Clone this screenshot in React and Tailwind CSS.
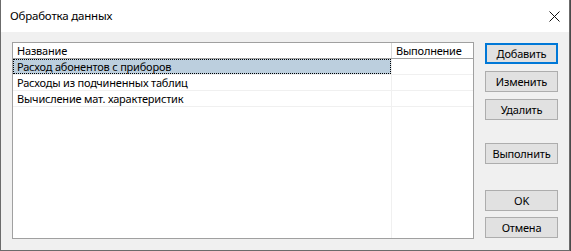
import React from "react";

const rows = [
    { name: "Расход абонентов с приборов", selected: true },
    { name: "Расходы из подчиненных таблиц" },
    { name: "Вычисление мат. характеристик" },
];

function Btn({ children, primary, className = "" }) {
    return (
        <button
            className={`w-[73px] h-[21px] flex items-center justify-center bg-[#e1e1e1] text-[11px] tracking-[-0.2px] text-black leading-none ${primary ? "border-2 border-[#0078d7]" : "border border-[#adadad]"} ${className}`}
        >
            {children}
        </button>
    );
}

export default function App() {
    return (
        <div className="w-[571px] h-[251px] bg-[#4a4a4a] font-['Noto_Sans','Open_Sans',sans-serif] text-black">
            <div className="w-[570px] h-[251px] flex flex-col border-l border-r border-b border-[#6b6b6b] bg-[#f0f0f0]">
                {/* title bar */}
                <div className="h-[32px] bg-white flex items-center justify-between pl-[9px] pr-[8px]">
                    <span className="text-[11.5px] tracking-[-0.2px] leading-none">Обработка данных</span>
                    <svg width="11" height="11" viewBox="0 0 11 11" className="mr-[1px]">
                        <path d="M0.5 0.5 L10.5 10.5 M10.5 0.5 L0.5 10.5" stroke="#111" strokeWidth="1" fill="none" />
                    </svg>
                </div>

                {/* body */}
                <div className="flex-1 flex pt-[10px] pl-[11px] gap-[11px]">
                    <div className="w-[462px] h-[197px] border border-[#a0a0a0] bg-white flex flex-col text-[11px] tracking-[-0.2px]">
                        <div className="h-[16px] flex border-b border-[#a0a0a0] shrink-0">
                            <div className="w-[379px] border-r border-[#d8d8d8] pl-[4px] leading-[15px]">Название</div>
                            <div className="flex-1 pl-[4px] leading-[15px]">Выполнение</div>
                        </div>
                        {rows.map((r, i) => (
                            <div key={i} className="h-[16px] flex border-b border-[#f0f0f0] shrink-0">
                                <div className={`w-[379px] border-r border-[#f0f0f0] ${r.selected ? "bg-[#bccfde]" : ""}`}>
                                    <div className={`h-full pl-[3px] leading-[13px] ${r.selected ? "border border-dotted border-black" : "border border-transparent"}`}>
                                        {r.name}
                                    </div>
                                </div>
                                <div className="flex-1" />
                            </div>
                        ))}
                        <div className="flex-1 flex">
                            <div className="w-[379px] border-r border-[#f0f0f0]" />
                        </div>
                    </div>

                    <div className="flex flex-col">
                        <Btn primary className="mt-[1px]">Добавить</Btn>
                        <Btn className="mt-[7px]">Изменить</Btn>
                        <Btn className="mt-[7px]">Удалить</Btn>
                        <Btn className="mt-[23px]">Выполнить</Btn>
                        <Btn className="mt-[26px]">OK</Btn>
                        <Btn className="mt-[6px]">Отмена</Btn>
                    </div>
                </div>
            </div>
        </div>
    );
}
